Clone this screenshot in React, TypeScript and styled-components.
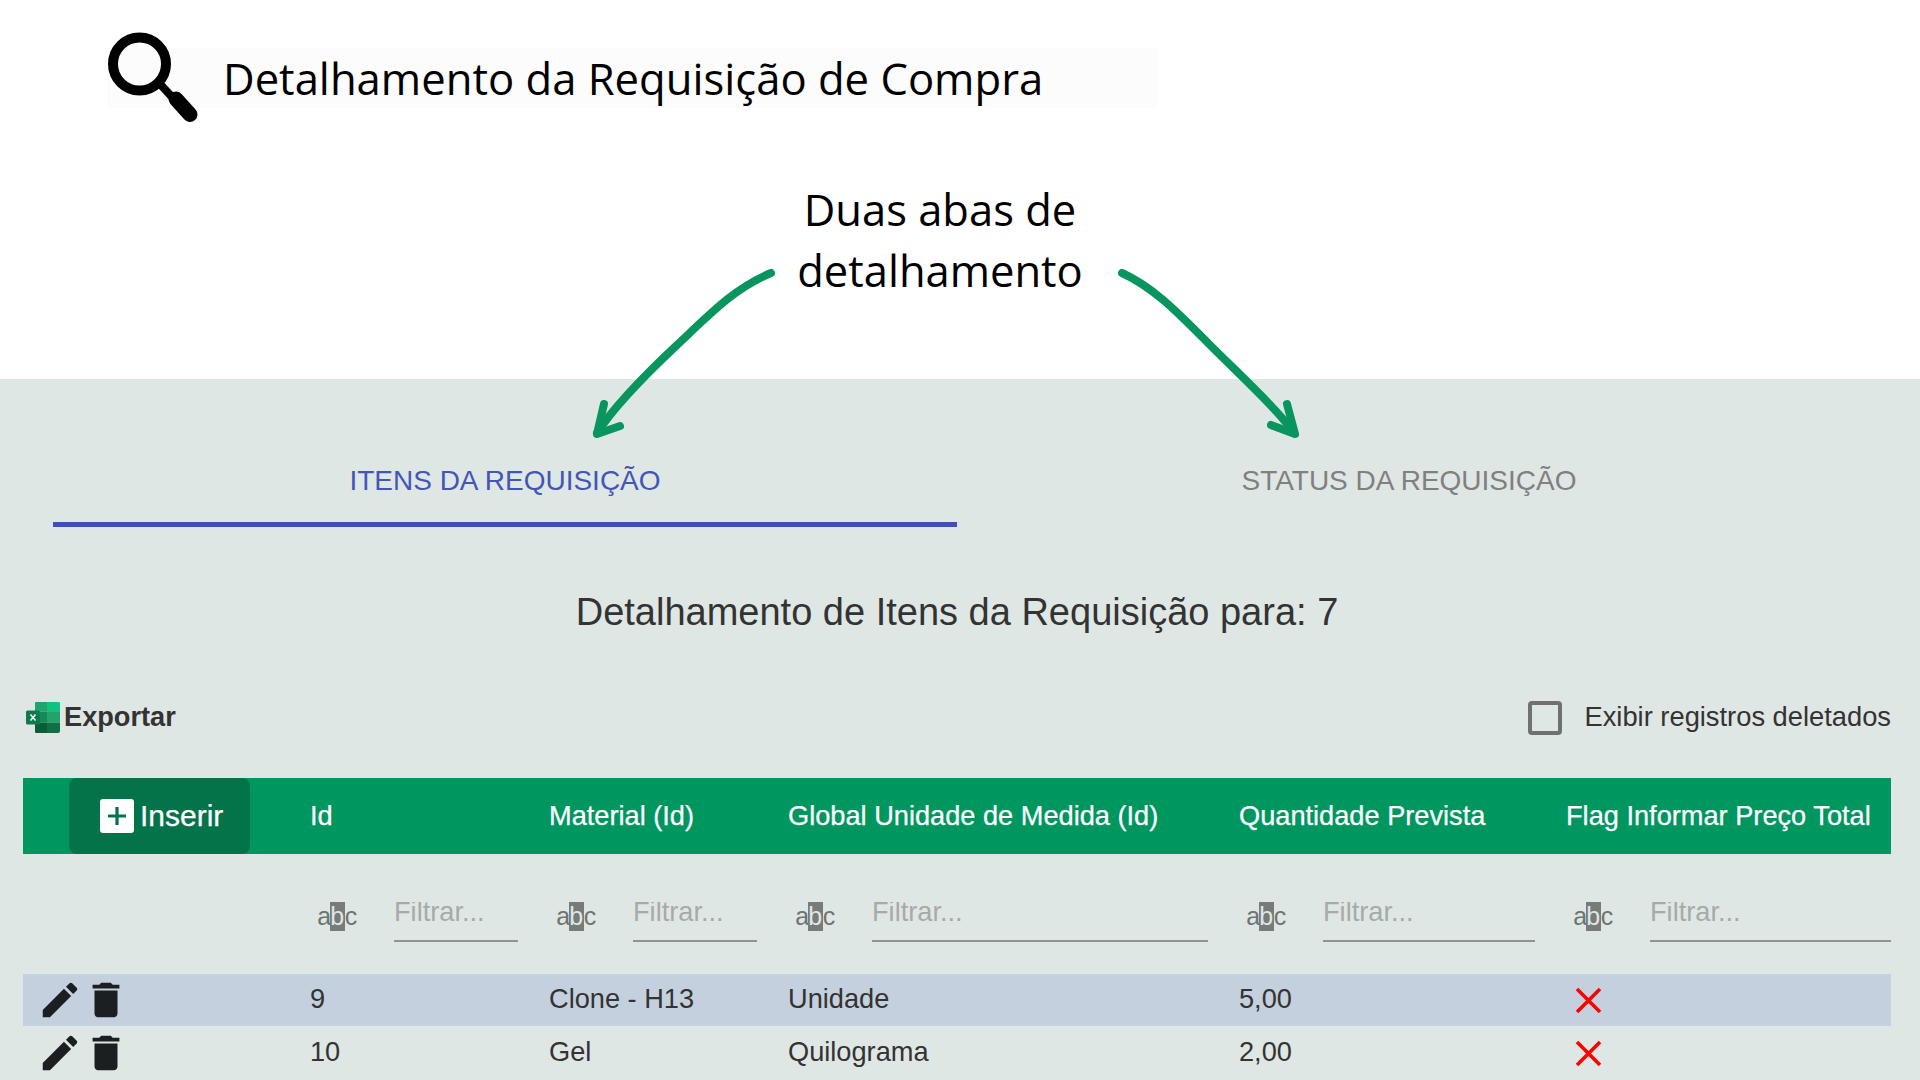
import { FC } from "react";
import styled, { createGlobalStyle } from "styled-components";

const GlobalStyle = createGlobalStyle`
  html, body {
    margin: 0;
    padding: 0;
    background: #ffffff;
    overflow: hidden;
  }

  * {
    box-sizing: border-box;
  }
`;

const GRID_COLUMNS = "287px 239px 239px 451px 327px 325px";

const Page = styled.div`
  position: relative;
  width: 1920px;
  height: 1080px;
  overflow: hidden;
  font-family: "Liberation Sans", Arial, sans-serif;
`;

const Intro = styled.section`
  height: 379px;
  padding-top: 48px;
  font-family: "Open Sans", sans-serif;
  color: #000000;
`;

const TitleBand = styled.div`
  display: flex;
  align-items: center;
  gap: 24px;
  width: 1051px;
  height: 60px;
  margin-left: 107px;
  background: #fcfcfc;
`;

const PageTitle = styled.h1`
  margin: 0;
  font-size: 43.6px;
  font-weight: 400;
  white-space: nowrap;
`;

const Note = styled.p`
  margin: 71px 40px 0 0;
  font-size: 43.5px;
  line-height: 61px;
  text-align: center;
`;

const Arrows = styled.svg`
  position: absolute;
  top: 0;
  left: 0;
  z-index: 2;
  pointer-events: none;
`;

const Panel = styled.section`
  height: 701px;
  padding: 0 29px 0 23px;
  background: #dfe7e4;
  color: #333333;
`;

const Tabs = styled.div`
  display: flex;
  padding-left: 30px;
`;

const Tab = styled.div<{ $active?: boolean }>`
  display: flex;
  align-items: flex-end;
  justify-content: center;
  width: 904px;
  height: 148px;
  padding-bottom: 21px;
  font-size: 28px;
  line-height: 40px;
  color: ${(p) => (p.$active ? "#4356b8" : "#808080")};
  border-bottom: 5px solid ${(p) => (p.$active ? "#3f51b5" : "transparent")};
`;

const DetailTitle = styled.h2`
  margin: 63px 0 0;
  font-size: 38px;
  font-weight: 400;
  line-height: 44px;
  text-align: center;
`;

const Toolbar = styled.div`
  display: flex;
  align-items: center;
  justify-content: space-between;
  height: 40px;
  margin-top: 63px;
`;

const ExportButton = styled.div`
  display: flex;
  align-items: center;
  gap: 4px;
  margin-left: 3px;
  font-size: 27.2px;
  font-weight: 700;
`;

const DeletedToggle = styled.label`
  display: flex;
  align-items: center;
  gap: 23px;
  font-size: 27.3px;
`;

const Checkbox = styled.input`
  appearance: none;
  width: 34px;
  height: 34px;
  margin: 2px 0 0;
  border: 4px solid #707070;
  border-radius: 4px;
`;

const HeaderRow = styled.div`
  display: grid;
  grid-template-columns: ${GRID_COLUMNS};
  align-items: center;
  height: 76px;
  margin-top: 41px;
  background: #00965f;
  color: #ffffff;
  font-size: 27.2px;
  -webkit-text-stroke: 0.25px #ffffff;
`;

const InsertButton = styled.div`
  display: flex;
  align-items: center;
  gap: 6px;
  width: 181px;
  height: 76px;
  margin-left: 46px;
  padding-left: 31px;
  border-radius: 8px;
  background: #04734a;
  font-size: 30px;
`;

const PlusBox = styled.span`
  display: flex;
  align-items: center;
  justify-content: center;
  width: 34px;
  height: 34px;
  border-radius: 3px;
  background: #ffffff;
`;

const FilterRow = styled.div`
  display: grid;
  grid-template-columns: ${GRID_COLUMNS};
  height: 120px;
`;

const FilterCell = styled.div`
  display: flex;
  align-items: flex-start;
  gap: 38px;
  padding: 48px 31px 0 7px;

  &:last-child {
    padding-right: 0;
  }
`;

const TypeIcon = styled.span`
  display: flex;
  align-items: center;
  justify-content: center;
  flex: none;
  width: 39px;
  height: 29px;
  font-size: 25px;
  letter-spacing: -1.5px;
  color: #6f7472;
`;

const TypeIconBox = styled.span`
  display: flex;
  align-items: center;
  justify-content: center;
  width: 15px;
  height: 29px;
  background: #777b79;
  color: #dfe7e4;
  letter-spacing: 0;
`;

const FilterInput = styled.input`
  flex: 1;
  min-width: 0;
  height: 40px;
  padding: 0 0 18px;
  border: 0;
  border-bottom: 2px solid #8f9492;
  border-radius: 0;
  outline: 0;
  background: transparent;
  font-family: inherit;
  font-size: 27.2px;

  &::placeholder {
    color: #a6abaa;
    opacity: 1;
  }
`;

const DataRow = styled.div<{ $selected?: boolean }>`
  display: grid;
  grid-template-columns: ${GRID_COLUMNS};
  align-items: center;
  height: 52px;
  margin-bottom: 1px;
  background: ${(p) => (p.$selected ? "#c5d0de" : "transparent")};
  font-size: 27.2px;
`;

const DataCell = styled.div`
  padding-bottom: 2px;
`;

const Actions = styled.div`
  display: flex;
  padding-left: 14px;
`;

const FlagCell = styled.div`
  display: flex;
  padding-left: 9px;
`;

const SearchIcon: FC = () => (
  <svg width="92" height="92" viewBox="107 32 92 92" style={{ flex: "none", overflow: "visible" }}>
    <circle cx="139.5" cy="64" r="26.5" fill="none" stroke="#000" strokeWidth="10" />
    <path d="M160 84 L172 97" stroke="#000" strokeWidth="8" />
    <path d="M176 99 L190 114.5" stroke="#000" strokeWidth="15" strokeLinecap="round" />
  </svg>
);

const ExcelIcon: FC = () => (
  <svg width="34" height="31" viewBox="0 0 34 31">
    <path d="M9 1a1 1 0 0 1 1-1h22a2 2 0 0 1 2 2v7.5H9z" fill="#20a46b" />
    <path d="M21 0h11a2 2 0 0 1 2 2v7.5H21z" fill="#0fc281" />
    <rect x="9" y="9.5" width="12" height="11" fill="#138a57" />
    <rect x="21" y="9.5" width="13" height="11" fill="#22a368" />
    <path d="M9 20.5h12V31H10a1 1 0 0 1-1-1z" fill="#0b5c39" />
    <path d="M21 20.5h13V29a2 2 0 0 1-2 2H21z" fill="#106f47" />
    <rect x="0" y="8.5" width="14" height="14" rx="1.5" fill="#0f7a4c" />
    <path d="M4.5 12.5l5 6M9.5 12.5l-5 6" stroke="#fff" strokeWidth="1.5" />
  </svg>
);

const PlusIcon: FC = () => (
  <svg width="22" height="22" viewBox="0 0 22 22">
    <path d="M11 2v18M2 11h18" stroke="#04734a" strokeWidth="3.2" />
  </svg>
);

const EditIcon: FC = () => (
  <svg width="46" height="46" viewBox="0 0 24 24" fill="#1c1f21">
    <path d="M3 17.25V21h3.75L17.81 9.94l-3.75-3.75L3 17.25zM20.71 7.04c.39-.39.39-1.02 0-1.41l-2.34-2.34c-.39-.39-1.02-.39-1.41 0l-1.83 1.83 3.75 3.75 1.83-1.83z" />
  </svg>
);

const DeleteIcon: FC = () => (
  <svg width="46" height="46" viewBox="0 0 24 24" fill="#1c1f21">
    <path d="M6 19c0 1.1.9 2 2 2h8c1.1 0 2-.9 2-2V7H6v12zM19 4h-3.5l-1-1h-5l-1 1H5v2h14V4z" />
  </svg>
);

const CrossIcon: FC = () => (
  <svg width="27" height="27" viewBox="0 0 27 27">
    <path d="M2 2l23 23M25 2L2 25" stroke="#ff0000" strokeWidth="3.6" />
  </svg>
);

const columns = [
  "Id",
  "Material (Id)",
  "Global Unidade de Medida (Id)",
  "Quantidade Prevista",
  "Flag Informar Preço Total",
];

const rows = [
  { id: "9", material: "Clone - H13", unit: "Unidade", amount: "5,00" },
  { id: "10", material: "Gel", unit: "Quilograma", amount: "2,00" },
];

const App: FC = () => (
  <Page>
    <GlobalStyle />

    <Intro>
      <TitleBand>
        <SearchIcon />
        <PageTitle>Detalhamento da Requisição de Compra</PageTitle>
      </TitleBand>
      <Note>
        Duas abas de
        <br />
        detalhamento
      </Note>
    </Intro>

    <Arrows width="1920" height="1080" viewBox="0 0 1920 1080" fill="none" stroke="#09955f" strokeWidth="8" strokeLinecap="round" strokeLinejoin="round">
      <path d="M771 273 C735 288 712 312 677 345 C645 375 615 405 597 433" />
      <path d="M604 404 L597 434 L620 426" />
      <path d="M1122 273 C1155 288 1180 315 1210 345 C1240 375 1278 410 1294 433" />
      <path d="M1287 404 L1295 434 L1271 425" />
    </Arrows>

    <Panel>
      <Tabs>
        <Tab $active>ITENS DA REQUISIÇÃO</Tab>
        <Tab>STATUS DA REQUISIÇÃO</Tab>
      </Tabs>

      <DetailTitle>Detalhamento de Itens da Requisição para: 7</DetailTitle>

      <Toolbar>
        <ExportButton>
          <ExcelIcon />
          Exportar
        </ExportButton>
        <DeletedToggle>
          <Checkbox type="checkbox" />
          Exibir registros deletados
        </DeletedToggle>
      </Toolbar>

      <HeaderRow>
        <InsertButton>
          <PlusBox>
            <PlusIcon />
          </PlusBox>
          Inserir
        </InsertButton>
        {columns.map((name) => (
          <div key={name}>{name}</div>
        ))}
      </HeaderRow>

      <FilterRow>
        <div />
        {columns.map((name) => (
          <FilterCell key={name}>
            <TypeIcon>
              a<TypeIconBox>b</TypeIconBox>c
            </TypeIcon>
            <FilterInput placeholder="Filtrar..." />
          </FilterCell>
        ))}
      </FilterRow>

      {rows.map((row, i) => (
        <DataRow key={row.id} $selected={i === 0}>
          <Actions>
            <EditIcon />
            <DeleteIcon />
          </Actions>
          <DataCell>{row.id}</DataCell>
          <DataCell>{row.material}</DataCell>
          <DataCell>{row.unit}</DataCell>
          <DataCell>{row.amount}</DataCell>
          <FlagCell>
            <CrossIcon />
          </FlagCell>
        </DataRow>
      ))}
    </Panel>
  </Page>
);

export default App;
